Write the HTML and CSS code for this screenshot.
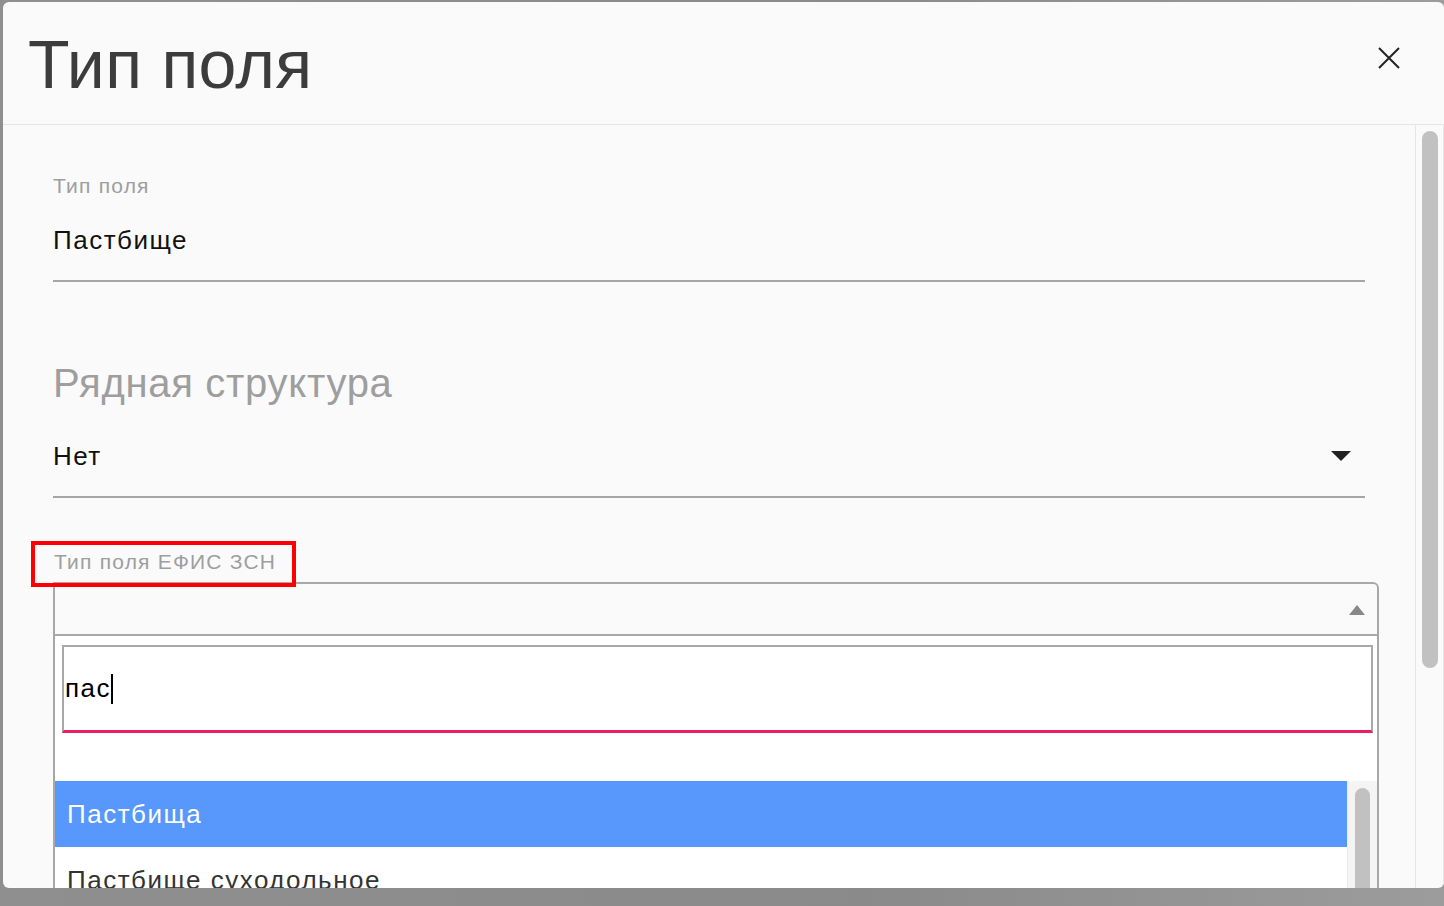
FILE: index.html
```html
<!DOCTYPE html>
<html lang="ru">
<head>
  <meta charset="UTF-8">
  <title>Тип поля</title>
  <link rel="stylesheet" href="styles.css">
</head>
<body>
  <div class="modal">
    <div class="modal-header">
      <h1>Тип поля</h1>
      <button class="close" aria-label="Закрыть">
        <svg width="22" height="22" viewBox="0 0 22 22"><path d="M1 1L21 21M21 1L1 21" stroke="#222" stroke-width="2" fill="none"/></svg>
      </button>
    </div>
    <div class="modal-body">
      <div class="content">
        <div class="field">
          <div class="label">Тип поля</div>
          <div class="value">Пастбище</div>
        </div>

        <div class="field field-select">
          <div class="label big">Рядная структура</div>
          <div class="value">Нет<span class="caret-down"></span></div>
        </div>

        <div class="field-efis">
          <div class="label-wrap">
            <span class="label">Тип поля ЕФИС ЗСН</span>
            <div class="mark"></div>
          </div>
          <div class="select2">
            <span class="caret-up"></span>
          </div>
          <div class="dropdown">
            <div class="search">
              <span class="typed">пас</span><span class="cursor"></span>
            </div>
            <div class="results">
              <ul class="options">
                <li class="active">Пастбища</li>
                <li>Пастбище суходольное</li>
              </ul>
              <div class="list-scroll"><div class="thumb"></div></div>
            </div>
          </div>
        </div>
      </div>
      <div class="scrollbar"><div class="thumb"></div></div>
    </div>
  </div>
</body>
</html>
```

FILE: styles.css
```css
body {
  margin: 0;
  height: 906px;
  overflow: hidden;
  background: linear-gradient(to right, #8f8f8f, #8a8a8a 60%, #9c9c9c);
  font-family: "Liberation Sans", Arial, sans-serif;
}
.modal {
  margin: 2px 0 0 3px;
  width: 1441px;
  height: 886px;
  background: #fafafa;
  border-radius: 6px;
  overflow: hidden;
  display: flex;
  flex-direction: column;
}
.modal-header {
  height: 122px;
  flex-shrink: 0;
  border-bottom: 1px solid #e6e6e6;
  display: flex;
  align-items: flex-start;
  justify-content: space-between;
}
.modal-header h1 {
  margin: 16px 0 0 25px;
  font-size: 68px;
  font-weight: 400;
  line-height: 92px;
  color: #3c3c3c;
  letter-spacing: 0.3px;
}
.close {
  margin: 45px 44px 0 0;
  padding: 0;
  border: none;
  background: none;
  width: 22px;
  height: 22px;
}
.modal-body {
  flex: 1;
  display: flex;
  overflow: hidden;
}
.content {
  flex: 1;
  padding: 49px 50px 0 50px;
}
.scrollbar {
  width: 29px;
  box-sizing: border-box;
  border-left: 1px solid #e6e6e6;
  border-right: 1px solid #e6e6e6;
  padding: 6px 0 0 6px;
}
.scrollbar .thumb {
  width: 16px;
  height: 537px;
  border-radius: 8px;
  background: #c1c1c1;
}
.field {
  border-bottom: 2px solid #a6a6a6;
  padding-bottom: 25px;
}
.label {
  font-size: 21px;
  line-height: 24px;
  letter-spacing: 1.2px;
  color: #9e9e9e;
}
.label.big {
  font-size: 40px;
  line-height: 44px;
  letter-spacing: 0.7px;
}
.value {
  margin-top: 27px;
  font-size: 26px;
  line-height: 30px;
  letter-spacing: 1.5px;
  color: #111;
  display: flex;
  justify-content: space-between;
  align-items: center;
}
.field-select {
  margin-top: 79px;
}
.field-select .value {
  margin-top: 36px;
}
.caret-down {
  width: 0;
  height: 0;
  border-left: 10px solid transparent;
  border-right: 10px solid transparent;
  border-top: 10px solid #222;
  margin-right: 14px;
}
.field-efis {
  margin-top: 52px;
  margin-right: -14px;
}
.label-wrap {
  position: relative;
  display: inline-block;
  padding-left: 1px;
}
.mark {
  position: absolute;
  top: -9px;
  left: -22px;
  right: -20px;
  bottom: -13px;
  border: 4px solid #ff0000;
  z-index: 2;
}
.select2 {
  margin-top: 8px;
  height: 50px;
  border: 2px solid #a8a8a8;
  border-radius: 0 6px 0 0;
  background: #fafafa;
  display: flex;
  align-items: center;
  justify-content: flex-end;
}
.caret-up {
  width: 0;
  height: 0;
  border-left: 8px solid transparent;
  border-right: 8px solid transparent;
  border-bottom: 10px solid #888;
  margin-right: 12px;
  margin-top: 2px;
}
.dropdown {
  border-left: 2px solid #a8a8a8;
  border-right: 2px solid #a8a8a8;
  background: #fff;
  padding-top: 9px;
  height: 260px;
}
.search {
  margin: 0 4px 0 7px;
  height: 83px;
  border: 2px solid #a8a8a8;
  border-bottom: 3px solid #e91e63;
  display: flex;
  align-items: center;
  padding-left: 1px;
  font-size: 26px;
  letter-spacing: 1.5px;
  color: #000;
}
.cursor {
  width: 2px;
  height: 30px;
  background: #000;
}
.results {
  margin-top: 48px;
  display: flex;
}
.options {
  flex: 1;
  margin: 0;
  padding: 0;
  list-style: none;
}
.options li {
  height: 66px;
  padding-left: 12px;
  font-size: 26px;
  line-height: 66px;
  letter-spacing: 1.5px;
  color: #333;
}
.options li.active {
  background: #5897fb;
  color: #fff;
}
.list-scroll {
  width: 30px;
  background: #f4f4f4;
  border-left: 1px solid #ececec;
  padding: 7px 0 0 7px;
  box-sizing: border-box;
}
.list-scroll .thumb {
  width: 15px;
  height: 200px;
  border-radius: 8px;
  background: #c1c1c1;
}
```
